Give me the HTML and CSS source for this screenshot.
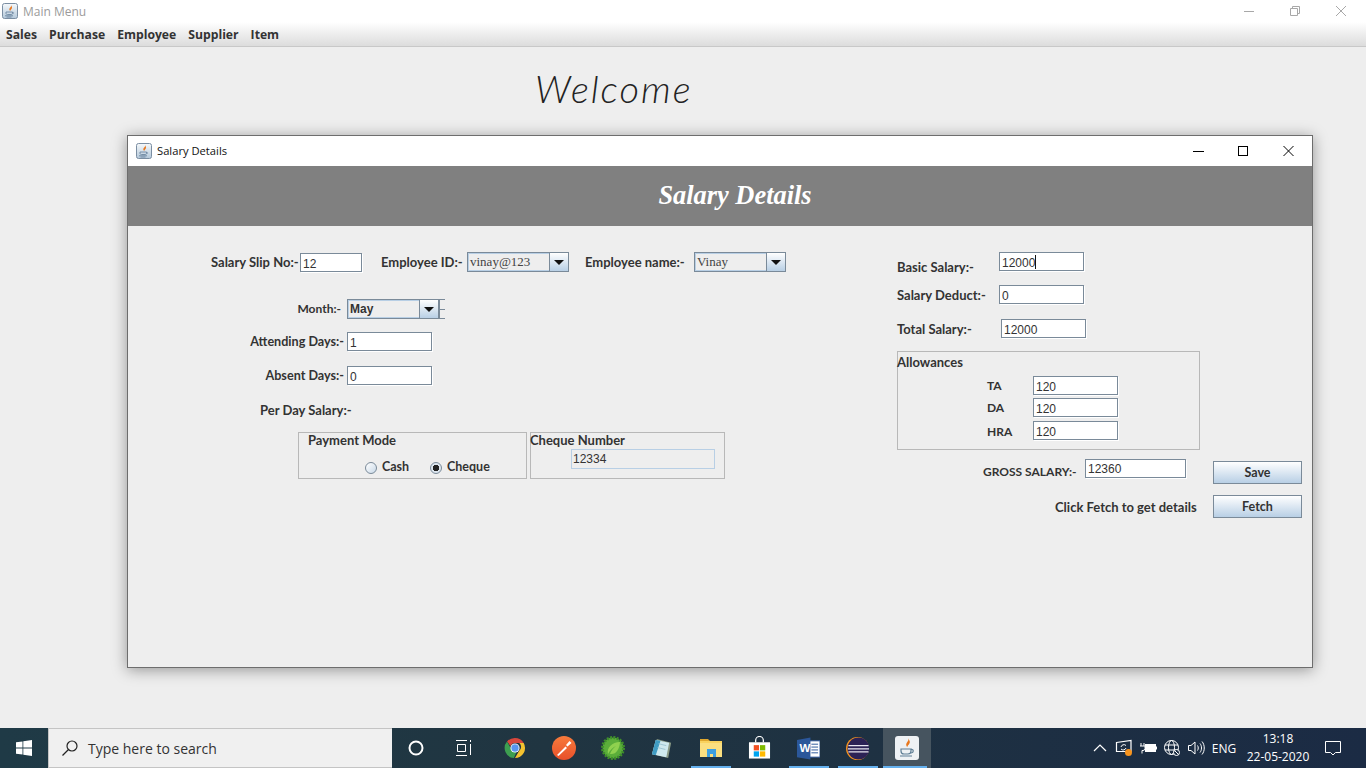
FILE: index.html
```
<!DOCTYPE html>
<html lang="en">
<head>
<meta charset="utf-8">
<title>Main Menu</title>
<link rel="stylesheet" href="styles.css">
</head>
<body>
<svg class="defs" width="0" height="0" aria-hidden="true">
  <defs>
    <linearGradient id="jbg" x1="0" y1="0" x2="0" y2="1"><stop offset="0" stop-color="#f6f9fb"/><stop offset="1" stop-color="#b4c8da"/></linearGradient>
    <symbol id="java" viewBox="0 0 16 16">
      <rect x=".5" y=".5" width="15" height="15" rx="2" fill="url(#jbg)" stroke="#7b8ea2"/>
      <path d="M9 2c1 2-2.500 3-1.500 5 .3.600.8 1 .8 1-.3-1 2.500-2.200 1.500-4.200C9.600 3 9.300 2.500 9 2z" fill="#e8761c"/>
      <path d="M4 9h6.500v1.200c0 1-.8 1.300-1.500 1.300H5.500c-.8 0-1.500-.4-1.500-1.300z" fill="none" stroke="#6d87a0" stroke-width=".9"/>
      <path d="M10.500 9.300c1.500-.3 1.800 1.200 0 1.600" fill="none" stroke="#6d87a0" stroke-width=".7"/>
      <path d="M3 12.800h8M4.500 14h5" stroke="#6d87a0" stroke-width=".9"/>
    </symbol>
  </defs>
</svg>

<header class="titlebar">
  <div class="titlebar-left">
    <svg class="icon-java" width="16" height="16"><use href="#java"/></svg>
    <span class="titlebar-text">Main Menu</span>
  </div>
  <div class="titlebar-controls">
    <svg class="ctl" width="46" height="20" viewBox="0 0 46 20"><path d="M18 10.500h10" stroke="#a8a8a8"/></svg>
    <svg class="ctl" width="46" height="20" viewBox="0 0 46 20"><path d="M18.500 7.500h7v7h-7zM20.500 7V5.500h7v7H26" fill="none" stroke="#a8a8a8"/></svg>
    <svg class="ctl" width="46" height="20" viewBox="0 0 46 20"><path d="M18 5l10 10M28 5L18 15" stroke="#a8a8a8"/></svg>
  </div>
</header>

<nav class="menubar">
  <span class="menu-item">Sales</span>
  <span class="menu-item">Purchase</span>
  <span class="menu-item">Employee</span>
  <span class="menu-item">Supplier</span>
  <span class="menu-item">Item</span>
</nav>

<main class="desktop">
  <h1 class="welcome">Welcome</h1>

  <section class="window">
    <div class="win-title">
      <div class="win-title-left">
        <svg class="icon-java" width="16" height="16"><use href="#java"/></svg>
        <span class="win-title-text">Salary Details</span>
      </div>
      <div class="win-controls">
        <svg width="45" height="16" viewBox="0 0 45 16"><path d="M17 8.500h11" stroke="#000" stroke-width="1"/></svg>
        <svg width="45" height="16" viewBox="0 0 45 16"><rect x="17.500" y="3.500" width="9" height="9" fill="none" stroke="#000"/></svg>
        <svg width="45" height="16" viewBox="0 0 45 16"><path d="M17.500 3l10 10M27.500 3l-10 10" stroke="#000"/></svg>
      </div>
    </div>
    <div class="banner">Salary Details</div>

    <div class="form">
      <div class="form-left">
        <div class="row row-top">
          <span class="label lbl-slip">Salary Slip No:-</span>
          <span class="field fw-62">12</span>
          <span class="label lbl-emp">Employee ID:-</span>
          <span class="combo combo-emp"><span class="combo-value serif">vinay@123</span><span class="combo-btn"><i class="tri"></i></span></span>
          <span class="label lbl-name">Employee name:-</span>
          <span class="combo combo-name"><span class="combo-value serif">Vinay</span><span class="combo-btn"><i class="tri"></i></span></span>
        </div>

        <div class="row row-month">
          <span class="label lbl-col lbl-month">Month:-</span>
          <span class="combo combo-month"><span class="combo-value bold">May</span><span class="combo-btn"><i class="tri"></i></span></span>
          <span class="spin-cut"></span>
        </div>
        <div class="row row-att">
          <span class="label lbl-col">Attending Days:-</span>
          <span class="field fw-85">1</span>
        </div>
        <div class="row row-abs">
          <span class="label lbl-col">Absent Days:-</span>
          <span class="field fw-85">0</span>
        </div>
        <div class="row row-perday">
          <span class="label">Per Day Salary:-</span>
        </div>

        <div class="groups">
          <div class="group group-pay">
            <div class="label pay-legend">Payment Mode</div>
            <div class="radios">
              <span class="radio"></span><span class="label radio-label radio-cash">Cash</span>
              <span class="radio radio-on"></span><span class="label radio-label">Cheque</span>
            </div>
          </div>
          <div class="group group-chq">
            <div class="label chq-legend">Cheque Number</div>
            <span class="field-off">12334</span>
          </div>
        </div>
      </div>

      <div class="form-right">
        <div class="row r-basic">
          <span class="label lbl-r lbl-r-low">Basic Salary:-</span>
          <span class="field fw-85">12000<i class="caret"></i></span>
        </div>
        <div class="row r-deduct">
          <span class="label lbl-r lbl-r-deduct">Salary Deduct:-</span>
          <span class="field fw-85">0</span>
        </div>
        <div class="row r-total">
          <span class="label lbl-r lbl-r2">Total Salary:-</span>
          <span class="field fw-85">12000</span>
        </div>

        <div class="group group-allow">
          <div class="label allow-legend">Allowances</div>
          <div class="row allow-row allow-ta">
            <span class="label allow-lbl">TA</span><span class="field fw-85">120</span>
          </div>
          <div class="row allow-row allow-da">
            <span class="label allow-lbl">DA</span><span class="field fw-85">120</span>
          </div>
          <div class="row allow-row allow-hra">
            <span class="label allow-lbl">HRA</span><span class="field fw-85">120</span>
          </div>
        </div>

        <div class="row r-gross">
          <span class="label lbl-gross">GROSS SALARY:-</span>
          <span class="field fw-101 field-high">12360</span>
          <span class="btn btn-save">Save</span>
        </div>
        <div class="row r-fetch">
          <span class="label lbl-fetch">Click Fetch to get details</span>
          <span class="btn">Fetch</span>
        </div>
      </div>
    </div>
  </section>
</main>

<footer class="taskbar">
  <div class="tb-start">
    <svg width="16" height="16" viewBox="0 0 16 16"><path d="M0 2.300l6.500-.9v6.200H0zM7.300 1.300L16 0v7.600H7.300zM0 8.400h6.500v6.200L0 13.700zM7.300 8.400H16V16l-8.700-1.200z" fill="#fff"/></svg>
  </div>
  <div class="tb-search">
    <svg width="18" height="18" viewBox="0 0 18 18"><circle cx="11" cy="7" r="5" fill="none" stroke="#222" stroke-width="1.200"/><path d="M7.500 10.500L1.500 16.500" stroke="#222" stroke-width="1.300"/></svg>
    <span class="tb-search-text">Type here to search</span>
  </div>
  <div class="tb-btn">
    <svg width="18" height="18" viewBox="0 0 18 18"><circle cx="9" cy="9" r="6.500" fill="none" stroke="#fff" stroke-width="2"/></svg>
  </div>
  <div class="tb-btn">
    <svg width="18" height="18" viewBox="0 0 18 18" fill="none" stroke="#fff"><path d="M1 1.500h11M1 16.500h11M2.500 5.500h8v7h-8zM15.500 1v2M15.500 5v11" /></svg>
  </div>

  <div class="tb-apps">
    <div class="app">
      <svg width="22" height="22" viewBox="0 0 24 24">
        <path d="M12 1a11 11 0 0 1 9.500 5.500H12a5.500 5.500 0 0 0-5 3.200L3.300 5A11 11 0 0 1 12 1z" fill="#d9473c"/>
        <path d="M21.500 6.500A11 11 0 0 1 12 23l4.600-8a5.500 5.500 0 0 0 .1-8.500z" fill="#f4c22f"/>
        <path d="M3.300 5L7.800 13a5.500 5.500 0 0 0 5.800 3.300L10.800 23A11 11 0 0 1 3.300 5z" fill="#3d9e50"/>
        <circle cx="12" cy="12" r="5" fill="#fff"/><circle cx="12" cy="12" r="4" fill="#5a95ee"/>
      </svg>
    </div>
    <div class="app">
      <svg width="24" height="24" viewBox="0 0 24 24">
        <defs><linearGradient id="pm" x1="0" y1="0" x2="0" y2="1"><stop offset="0" stop-color="#f77b3c"/><stop offset="1" stop-color="#e8502a"/></linearGradient></defs>
        <circle cx="12" cy="12" r="12" fill="url(#pm)"/>
        <path d="M5 19l8.500-8.500 1.500 1.500-8.500 8zM14 9l3.500-4 2 2-4 3.500z" fill="#fff"/>
      </svg>
    </div>
    <div class="app">
      <svg width="24" height="24" viewBox="0 0 24 24">
        <circle cx="12" cy="12" r="10.500" fill="#5bae3a" stroke="#3f8f2b" stroke-width="3" stroke-dasharray="2 1.300"/>
        <path d="M7 18c-1.500-6 4-12 12-12-.5 7-4 13-10 12 1-3 3-6 6-8-3 1.500-6 4-8 8z" fill="#8fd14f"/>
      </svg>
    </div>
    <div class="app">
      <svg width="23" height="23" viewBox="0 0 24 24">
        <path d="M7 2l15 4-3 16-12-3z" fill="#8a9a86"/>
        <path d="M6 3l14 3-3 15L2 18z" fill="#cfe9ee"/>
        <path d="M2 18l4-15 5 1-5 15z" fill="#3f9bc2"/>
        <path d="M9 7l8 2M8 11l8 2" stroke="#9ec6d2"/>
      </svg>
    </div>
    <div class="app">
      <svg width="22" height="18" viewBox="0 0 22 18">
        <path d="M0 0h8l2 2H0z" fill="#e0a82e"/>
        <rect y="2" width="22" height="16" fill="#f9d25e"/>
        <path d="M0 4h22v14H0z" fill="#fbdf80"/>
        <path d="M7 10h9v8h-3v-3h-3v3H7z" fill="#3d9fe0"/>
      </svg>
    </div>
    <div class="app">
      <svg width="23" height="24" viewBox="0 0 24 24">
        <path d="M8 6V4a4 4 0 0 1 8 0v2" fill="none" stroke="#fff" stroke-width="1.300"/>
        <path d="M1 6h22v17H1z" fill="#fff"/>
        <rect x="6" y="9" width="5.500" height="5.500" fill="#f25022"/>
        <rect x="12.500" y="9" width="5.500" height="5.500" fill="#7fba00"/>
        <rect x="6" y="15.500" width="5.500" height="5.500" fill="#00a4ef"/>
        <rect x="12.500" y="15.500" width="5.500" height="5.500" fill="#ffb900"/>
      </svg>
    </div>
    <div class="app app-run">
      <svg width="23" height="23" viewBox="0 0 24 24">
        <rect x="9" y="4" width="15" height="17" fill="#fff" stroke="#2b579a"/>
        <path d="M15 7.500h7M15 10.500h7M15 13.500h7M15 16.500h7" stroke="#2b579a"/>
        <path d="M0 3l14-2.500v23L0 21z" fill="#2b579a"/>
        <text class="word-w" x="2.500" y="16">W</text>
      </svg>
    </div>
    <div class="app app-run">
      <svg width="23" height="23" viewBox="0 0 24 24">
        <circle cx="12" cy="12" r="12" fill="#f7941e"/>
        <circle cx="13" cy="12" r="11.500" fill="#2c2255"/>
        <path d="M2.500 9h21M2 12.500h22M2.500 15.500h21" stroke="#e8e6f0" stroke-width="1.300"/>
      </svg>
    </div>
    <div class="app app-active">
      <svg width="24" height="24" viewBox="0 0 24 24">
        <rect width="24" height="24" rx="3" fill="#eef1f4"/>
        <path d="M13 2c2 3-3 4.500-1.500 8 .4.800 1 1.200 1 1.200-.5-2 3.500-3.500 2-6.500-.4-.9-1-1.900-1.500-2.700z" fill="#e8761c"/>
        <path d="M6 13h10v2c0 2-1 3-3 3H9c-2 0-3-1-3-3z" fill="none" stroke="#5f7f96" stroke-width="1.200"/>
        <path d="M16 13.500c3-.5 3 3 0 3.500M5 20h12" fill="none" stroke="#5f7f96" stroke-width="1.200"/>
      </svg>
    </div>
  </div>

  <div class="tray">
    <span class="tray-icon"><svg width="14" height="14" viewBox="0 0 14 14"><path d="M1 10l6-6 6 6" fill="none" stroke="#fff" stroke-width="1.200"/></svg></span>
    <span class="tray-icon"><svg width="18" height="18" viewBox="0 0 18 18"><path d="M1.500 3.500L16 1.500v11H1.500z" fill="none" stroke="#fff" stroke-width="1.200"/><path d="M6 8a3 3 0 0 1 5-1.500M11 9a3 3 0 0 1-5 1" fill="none" stroke="#fff"/><circle cx="13.500" cy="13.500" r="3.500" fill="#f7941e"/></svg></span>
    <span class="tray-icon"><svg width="18" height="14" viewBox="0 0 18 14"><path d="M2 2v3M5 2v3M1 5h5v2.500a2 2 0 0 1-2 2h-1v3" fill="none" stroke="#fff"/><rect x="6.500" y="3.500" width="10" height="7" fill="#fff" stroke="#fff"/><path d="M17.500 5.500v3" stroke="#fff"/></svg></span>
    <span class="tray-icon"><svg width="18" height="18" viewBox="0 0 18 18" fill="none" stroke="#fff"><circle cx="8.500" cy="8.500" r="7"/><ellipse cx="8.500" cy="8.500" rx="3" ry="7"/><path d="M2 6h13M2 11h13"/><circle cx="13.500" cy="13.500" r="3" fill="#1d2f44"/><path d="M11.500 11.500l4 4"/></svg></span>
    <span class="tray-icon"><svg width="18" height="16" viewBox="0 0 18 16" fill="none" stroke="#fff"><path d="M1.500 5.500h2.500L8 2v12L4 10.500H1.500z"/><path d="M10.500 5.500c1 1.500 1 3.500 0 5M13 3.500c2 2.500 2 6.500 0 9M15 1.500c3 3.500 3 9.500 0 13"/></svg></span>
    <span class="tray-lang">ENG</span>
    <div class="clock"><div>13:18</div><div>22-05-2020</div></div>
    <span class="tray-note"><svg width="16" height="15" viewBox="0 0 16 15"><path d="M.5.500h15v11h-5l-2.500 2.500-2.500-2.500h-5z" fill="none" stroke="#fff"/></svg></span>
  </div>
</footer>
</body>
</html>
```

FILE: styles.css
```
* { box-sizing: border-box; }
html, body { margin: 0; padding: 0; }
body {
  width: 1366px;
  height: 768px;
  overflow: hidden;
  display: flex;
  flex-direction: column;
  background: #eeeeee;
  font-family: "Open Sans", "Liberation Sans", sans-serif;
  color: #333;
}
.defs { position: absolute; }
.icon-java { display: block; flex: none; }

/* Main frame chrome */
.titlebar {
  height: 22px;
  flex: none;
  background: #fff;
  display: flex;
  justify-content: space-between;
  align-items: center;
}
.titlebar-left { display: flex; align-items: center; padding-left: 2px; gap: 5px; }
.titlebar-text { font-size: 12px; color: #9b9b9b; }
.titlebar-controls { display: flex; margin-right: 2px; }
.titlebar-controls .ctl { display: block; }
.menubar {
  height: 25px;
  flex: none;
  display: flex;
  align-items: center;
  padding-left: 6px;
  gap: 12px;
  background: linear-gradient(#ffffff, #dcdcdc);
  border-bottom: 1px solid #c8c8c8;
}
.menu-item { font-size: 12.2px; font-weight: 700; color: #333; }

.desktop { flex: 1; position: relative; background: #eeeeee; }
.welcome {
  margin: 0;
  padding: 16px 0 0 535px;
  font-family: "Lato", sans-serif;
  font-style: italic;
  font-weight: 300;
  font-size: 38px;
  line-height: 50px;
  letter-spacing: 2px;
  color: #222;
}

/* Internal window: lives on the desktop canvas */
.window {
  position: absolute;
  left: 127px;
  top: 88px;
  width: 1186px;
  height: 533px;
  background: #eeeeee;
  border: 1px solid #6d6d6d;
  box-shadow: 0 2px 14px rgba(0, 0, 0, .38);
  display: flex;
  flex-direction: column;
}
.win-title {
  height: 30px;
  flex: none;
  background: #fff;
  display: flex;
  align-items: center;
  justify-content: space-between;
}
.win-title-left { display: flex; align-items: center; padding-left: 8px; gap: 5px; }
.win-title-text { font-size: 11.2px; color: #111; padding-bottom: 2px; }
.win-controls { display: flex; margin-right: 1px; }
.win-controls svg { display: block; }
.banner {
  height: 60px;
  flex: none;
  background: #808080;
  color: #fff;
  text-align: center;
  font-family: "Liberation Serif", serif;
  font-style: italic;
  font-weight: 700;
  font-size: 26.4px;
  line-height: 58px;
  padding-left: 30px;
}

/* Form */
.form { flex: 1; display: flex; background: #eeeeee; }
.form-left { width: 769px; padding: 26px 0 0 83px; flex: none; }
.form-right { flex: 1; padding-top: 26px; }
.row { display: flex; align-items: center; }
.label {
  font-family: "Lato", "Liberation Sans", sans-serif;
  font-weight: 700;
  font-size: 13px;
  color: #333;
  white-space: nowrap;
}
.field {
  display: block;
  height: 19px;
  flex: none;
  background: #fff;
  border: 1px solid #7a8a99;
  box-shadow: 1px 1px 0 #fff;
  font-family: "Liberation Sans", sans-serif;
  font-size: 12px;
  line-height: 21px;
  color: #333;
  padding-left: 2px;
}
.fw-62 { width: 62px; }
.fw-85 { width: 85px; }
.fw-101 { width: 101px; }
.field-high { line-height: 19px; }
.caret { display: inline-block; width: 1px; height: 14px; background: #111; vertical-align: -2px; }

.combo {
  display: flex;
  flex: none;
  height: 20px;
  border: 1px solid #7a8a99;
  background: #eeeeee;
}
.combo-value {
  flex: 1;
  border: 1px solid #b8cfe5;
  border-width: 1px 0 1px 1px;
  padding-left: 1px;
  font-size: 12px;
  line-height: 16px;
  color: #333;
}
.serif { font-family: "Liberation Serif", serif; font-size: 13px; color: #444; }
.bold { font-family: "Liberation Sans", sans-serif; font-weight: 700; font-size: 12px; }
.combo-btn {
  width: 19px;
  flex: none;
  border-left: 1px solid #7a8a99;
  background: linear-gradient(#ffffff, #b8cfe5);
  display: flex;
  align-items: center;
  justify-content: center;
}
.tri {
  display: block;
  width: 0;
  height: 0;
  border-left: 5px solid transparent;
  border-right: 5px solid transparent;
  border-top: 5px solid #111;
}
.combo-emp { width: 102px; }
.combo-name { width: 92px; }
.combo-month { width: 92px; }
.spin-cut {
  width: 6px;
  height: 20px;
  flex: none;
  background:
    linear-gradient(#7a8a99, #7a8a99) 0 50% / 6px 1px no-repeat,
    linear-gradient(#7a8a99, #7a8a99) 0 0 / 6px 1px no-repeat,
    linear-gradient(#7a8a99, #7a8a99) 0 100% / 6px 1px no-repeat,
    linear-gradient(#7a8a99, #7a8a99) 0 0 / 1px 100% no-repeat;
}

.row-top { height: 20px; }
.lbl-slip { width: 89px; }
.lbl-emp { margin-left: 19px; width: 86px; }
.lbl-name { margin-left: 16px; width: 109px; }
.row-month { margin-top: 27px; height: 20px; }
.row-att { margin-top: 13px; height: 19px; }
.row-abs { margin-top: 15px; height: 19px; }
.row-perday { margin-top: 15px; height: 20px; padding-left: 49px; }
.lbl-col { width: 136px; text-align: right; padding-right: 3px; font-size: 12.6px; }
.lbl-month { padding: 0 6px 2px 0; font-size: 12px; }

.groups { display: flex; gap: 3px; margin: 12px 0 0 87px; }
.group { border: 1px solid #b8b8b8; }
.group-pay { width: 229px; height: 47px; padding-left: 9px; }
.pay-legend { line-height: 15px; }
.radios { display: flex; align-items: center; padding: 11px 0 0 57px; }
.radio {
  display: block;
  width: 12px;
  height: 12px;
  flex: none;
  border-radius: 50%;
  border: 1px solid #7a8a99;
  background: linear-gradient(135deg, #fff, #c9d9e8);
}
.radio-on { background: radial-gradient(circle, #222 0 3px, #dde6ef 3.500px); }
.radio-label { margin-left: 5px; font-size: 12.5px; padding-bottom: 2px; }
.radio-cash { width: 48px; }
.group-chq { width: 195px; height: 47px; }
.chq-legend { line-height: 15px; margin: 0 0 1px -1px; }
.field-off {
  display: block;
  margin: 0 0 0 40px;
  width: 144px;
  height: 20px;
  border: 1px solid #b8cfe5;
  font-family: "Liberation Sans", sans-serif;
  font-size: 12px;
  line-height: 18px;
  color: #333;
  padding-left: 1px;
}

.lbl-r { width: 102px; }
.lbl-r-low { padding-top: 11px; }
.lbl-r-deduct { padding-top: 1px; }
.lbl-r2 { width: 104px; padding-top: 1px; }
.r-basic { height: 19px; }
.r-deduct { margin-top: 14px; height: 19px; }
.r-total { margin-top: 15px; height: 19px; }
.group-allow { width: 303px; height: 99px; margin-top: 13px; }
.allow-legend { line-height: 21px; margin-left: -1px; }
.allow-row { padding-left: 89px; height: 19px; }
.allow-lbl { width: 46px; font-size: 12px; }
.allow-ta { margin-top: 3px; }
.allow-da { margin-top: 3px; }
.allow-hra { margin-top: 4px; }
.allow-hra .allow-lbl { padding-top: 1px; }
.r-gross { margin-top: 9px; height: 25px; align-items: flex-start; }
.lbl-gross { margin-left: 86px; width: 102px; line-height: 25px; font-size: 12px; }
.btn-save { margin-left: 27px; margin-top: 2px; }
.r-fetch { margin-top: 11px; height: 23px; }
.lbl-fetch { margin-left: 158px; width: 158px; }
.btn {
  display: block;
  width: 89px;
  height: 23px;
  flex: none;
  border: 1px solid #7a8a99;
  background: linear-gradient(#ffffff, #b8cfe5);
  text-align: center;
  font-family: "Lato", sans-serif;
  font-weight: 700;
  font-size: 12.5px;
  line-height: 21px;
  color: #333;
}

/* Taskbar */
.taskbar {
  height: 40px;
  flex: none;
  display: flex;
  align-items: stretch;
  background: linear-gradient(90deg, #1f3a46 0%, #203541 40%, #1b2b44 100%);
}
.tb-start { width: 48px; display: flex; align-items: center; justify-content: center; }
.tb-search {
  width: 344px;
  background: #f0f0f0;
  border: 1px solid #c4c4c4;
  border-right: 0;
  display: flex;
  align-items: center;
  padding-left: 12px;
  gap: 9px;
}
.tb-search-text { font-family: "Open Sans", sans-serif; font-size: 14px; color: #333; }
.tb-btn { width: 48px; display: flex; align-items: center; justify-content: center; }
.tb-apps { display: flex; padding-left: 2px; }
.app {
  width: 49px;
  display: flex;
  align-items: center;
  justify-content: center;
}
.app:nth-child(5), .app-run {
  background: linear-gradient(#64b0ee, #64b0ee) center bottom / 40px 2px no-repeat;
}
.app-active {
  width: 48px;
  margin-left: 1px;
  background: linear-gradient(#64b0ee, #64b0ee) left bottom / 44px 2px no-repeat, #46545f;
}
.word-w { font-family: "Liberation Sans", sans-serif; font-weight: 700; font-size: 12px; fill: #fff; }
.tray { margin-left: auto; display: flex; align-items: center; color: #fff; padding-right: 18px; }
.tray-icon { width: 24px; display: flex; align-items: center; justify-content: center; }
.tray-lang { width: 28px; text-align: center; font-size: 12px; margin-left: 2px; }
.clock { width: 80px; text-align: center; font-size: 12px; line-height: 18px; }
.tray-note { width: 30px; display: flex; justify-content: center; }
```
